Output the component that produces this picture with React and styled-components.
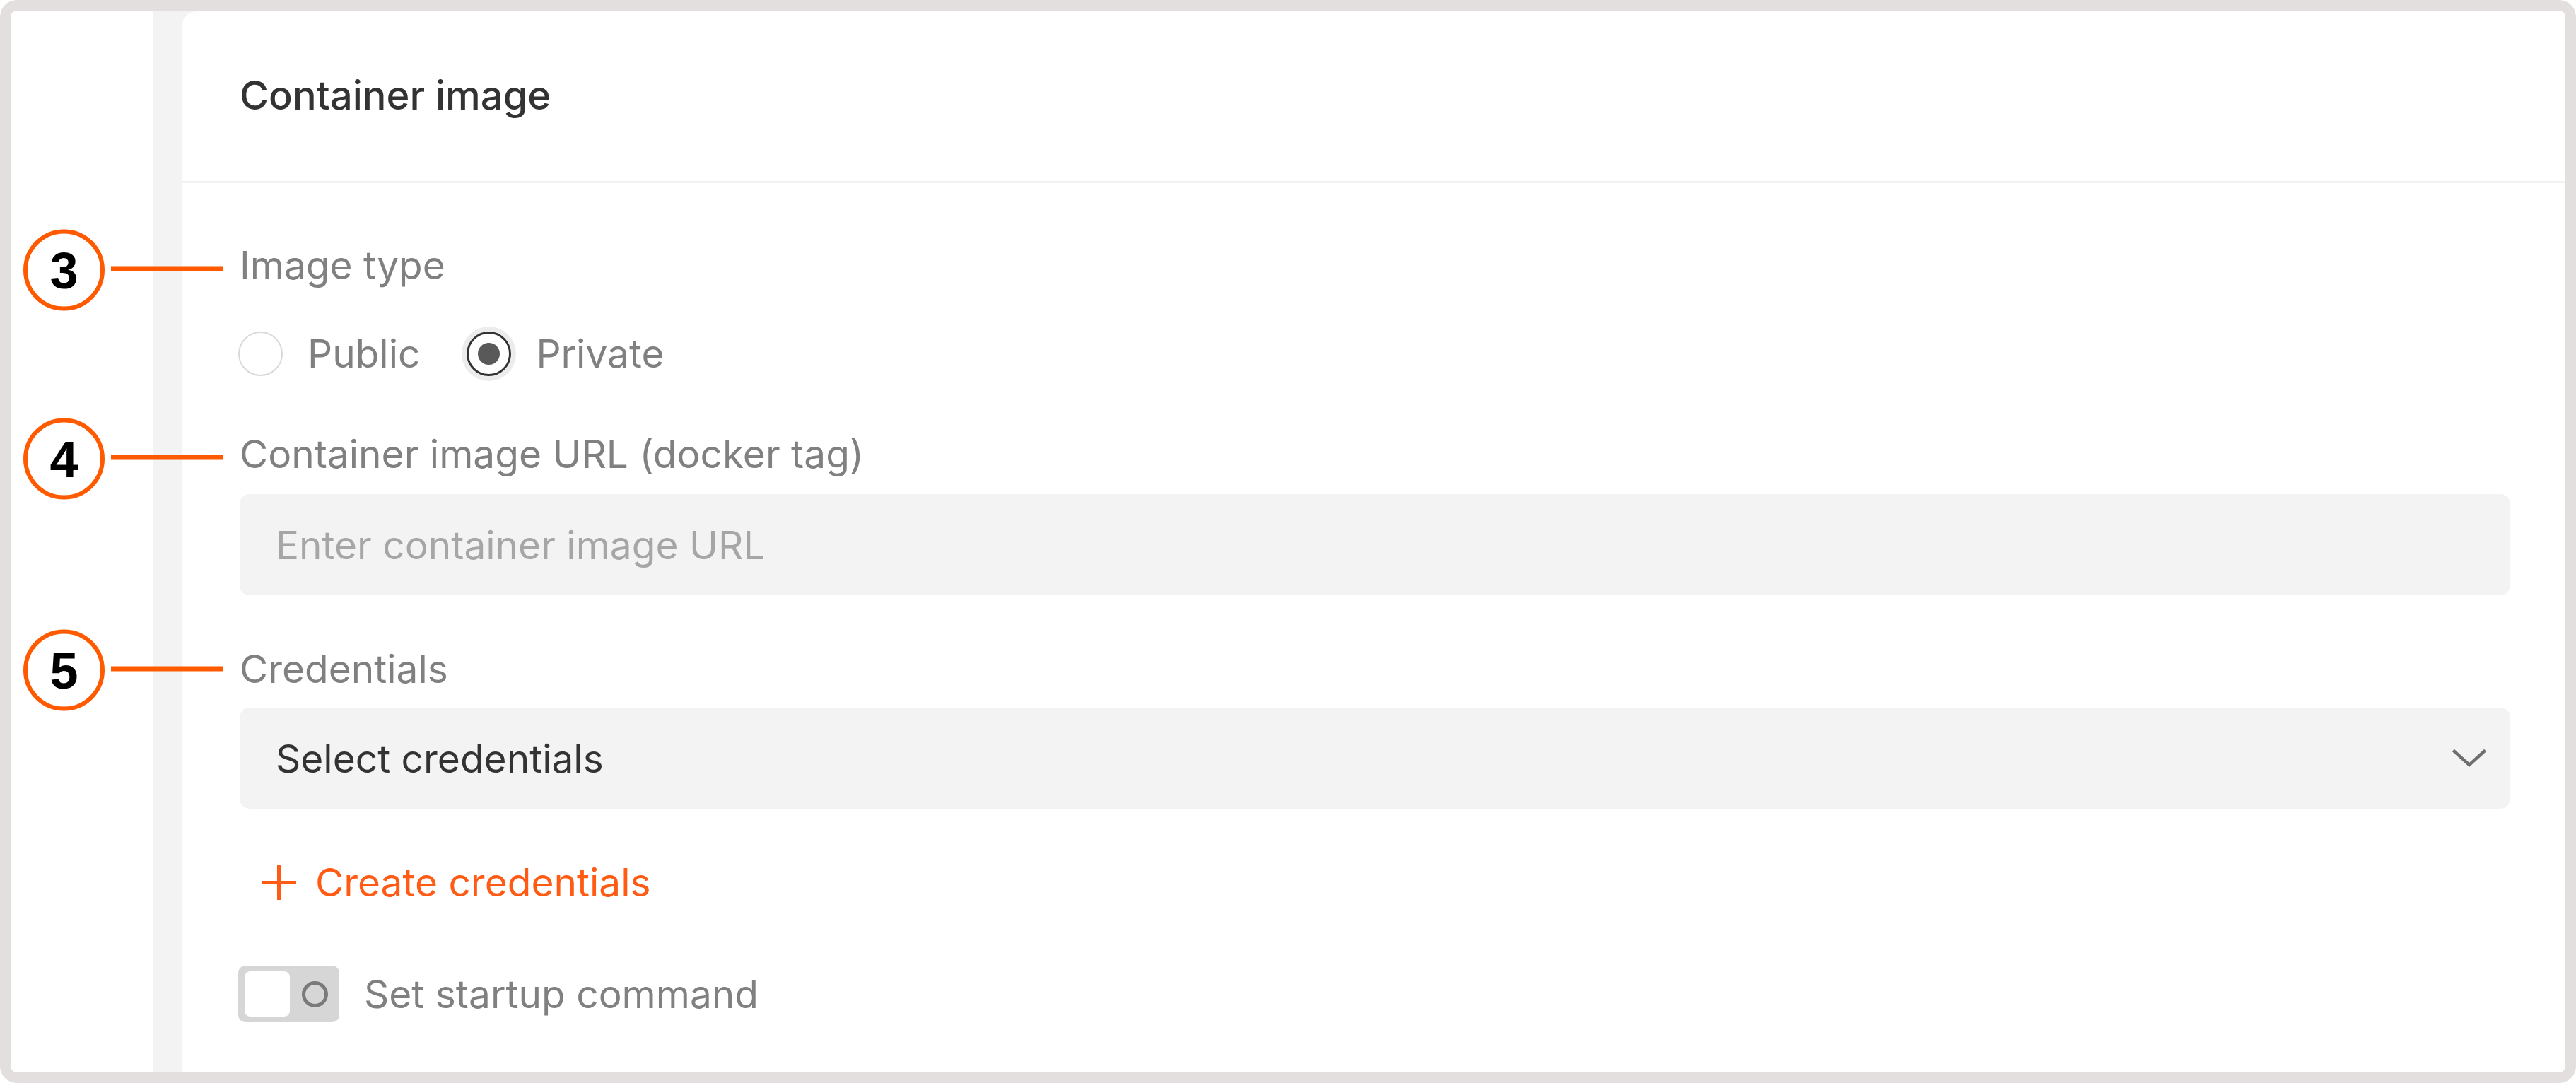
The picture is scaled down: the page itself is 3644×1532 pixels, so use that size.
import React from "react";
import styled, { createGlobalStyle, css } from "styled-components";

const GlobalStyle = createGlobalStyle`
  html, body {
    margin: 0;
    padding: 0;
    background: #ffffff;
  }
  * { box-sizing: border-box; }
  body {
    font-family: Inter, "Noto Sans", "Liberation Sans", sans-serif;
  }
`;

const ORANGE = "#ff5a00";

const Frame = styled.div`
  width: 3644px;
  height: 1532px;
  background: #e2dfde;
  border-radius: 24px;
  padding: 16px;
`;

const Screen = styled.div`
  height: 100%;
  background: #ffffff;
  border-radius: 6px;
  overflow: hidden;
  display: flex;
`;

const Gutter = styled.div`
  width: 200px;
  flex: none;
  background: #ffffff;
`;

const Canvas = styled.div`
  flex: 1;
  background: #f3f3f3;
  padding-left: 42px;
  display: flex;
`;

const Card = styled.section`
  flex: 1;
  background: #ffffff;
  border-top-left-radius: 20px;
  display: flex;
  flex-direction: column;
`;

const CardHeader = styled.header`
  height: 243px;
  padding-left: 81px;
  display: flex;
  align-items: center;
  border-bottom: 3px solid #f2f2f2;
  padding-bottom: 3px;
`;

const CardTitle = styled.h2`
  margin: 0;
  font-size: 56px;
  line-height: 80px;
  font-weight: 500;
  color: #333333;
`;

const CardBody = styled.div`
  padding: 76px 77px 0 81px;
  display: flex;
  flex-direction: column;
  align-items: stretch;
`;

const FieldLabel = styled.div`
  position: relative;
  font-size: 55px;
  line-height: 80px;
  color: #808080;
  margin-top: ${(p) => p.$gap || 0}px;
`;

const Annotation = styled.div`
  position: absolute;
  left: -306px;
  top: 50%;
  transform: translateY(calc(-50% + ${(p) => p.$shift || 0}px));
  display: flex;
  align-items: center;
  pointer-events: none;
`;

const AnnotationBadge = styled.span`
  width: 115px;
  height: 115px;
  border-radius: 50%;
  border: 6px solid ${ORANGE};
  background: #ffffff;
  display: flex;
  align-items: center;
  justify-content: center;
  font-family: "Liberation Sans", Arial, sans-serif;
  font-weight: 700;
  font-size: 72px;
  line-height: 1;
  color: #000000;
`;

const AnnotationLine = styled.span`
  width: 159px;
  height: 7px;
  margin-left: 9px;
  background: ${ORANGE};
  margin-top: ${(p) => p.$lineShift || 0}px;
`;

const RadioGroup = styled.div`
  display: flex;
  align-items: center;
  height: 80px;
  margin-top: 45px;
  margin-left: -2px;
  gap: 66px;
`;

const RadioOption = styled.label`
  display: flex;
  align-items: center;
  gap: 35px;
  font-size: 55px;
  line-height: 80px;
  color: #808080;
`;

const RadioCircle = styled.span`
  width: 63px;
  height: 63px;
  border-radius: 50%;
  flex: none;
  display: flex;
  align-items: center;
  justify-content: center;
  background: #ffffff;
  border: 2px solid #d9d9d9;
  ${(p) =>
    p.$checked &&
    css`
      border: 3px solid #333333;
      box-shadow: 0 0 0 7px #ececec;
      &::after {
        content: "";
        width: 31px;
        height: 31px;
        border-radius: 50%;
        background: #595959;
      }
    `}
`;

const fieldBox = css`
  height: 143px;
  border-radius: 14px;
  background: #f3f3f3;
  padding: 0 34px 0 51px;
  display: flex;
  align-items: center;
  font-size: 55px;
  margin-top: ${(p) => p.$gap || 0}px;
`;

const TextInput = styled.div`
  ${fieldBox}
  color: #a6a6a6;
`;

const SelectBox = styled.div`
  ${fieldBox}
  color: #333333;
  justify-content: space-between;
`;

const Chevron = styled.svg`
  width: 48px;
  height: 28px;
  flex: none;
`;

const CreateLink = styled.div`
  margin-top: 64px;
  height: 80px;
  display: flex;
  align-items: center;
  gap: 27px;
  padding-left: 31px;
  font-size: 55px;
  color: #ff5b14;
`;

const PlusIcon = styled.svg`
  width: 49px;
  height: 49px;
  flex: none;
`;

const ToggleRow = styled.div`
  margin-top: 78px;
  height: 80px;
  display: flex;
  align-items: center;
  gap: 35px;
  margin-left: -2px;
  font-size: 55px;
  color: #808080;
`;

const Toggle = styled.span`
  width: 143px;
  height: 80px;
  border-radius: 10px;
  background: #d6d6d6;
  flex: none;
  display: flex;
  align-items: center;
  padding-left: 9px;
`;

const ToggleKnob = styled.span`
  width: 64px;
  height: 64px;
  border-radius: 8px;
  background: #ffffff;
  flex: none;
`;

const ToggleOffMark = styled.span`
  width: 37px;
  height: 37px;
  border-radius: 50%;
  border: 5px solid #7a7a7a;
  margin-left: 17px;
  flex: none;
`;

function Marker({ n, shift = 0 }) {
  return (
    <Annotation $shift={shift}>
      <AnnotationBadge>{n}</AnnotationBadge>
      <AnnotationLine $lineShift={-4} />
    </Annotation>
  );
}

export default function App() {
  return (
    <>
      <GlobalStyle />
      <Frame>
        <Screen>
          <Gutter />
          <Canvas>
            <Card>
              <CardHeader>
                <CardTitle>Container image</CardTitle>
              </CardHeader>
              <CardBody>
                <FieldLabel>
                  <Marker n="3" shift={7} />
                  Image type
                </FieldLabel>
                <RadioGroup>
                  <RadioOption>
                    <RadioCircle />
                    Public
                  </RadioOption>
                  <RadioOption>
                    <RadioCircle $checked />
                    Private
                  </RadioOption>
                </RadioGroup>

                <FieldLabel $gap={62}>
                  <Marker n="4" shift={7} />
                  Container image URL (docker tag)
                </FieldLabel>
                <TextInput $gap={17}>Enter container image URL</TextInput>

                <FieldLabel $gap={64}>
                  <Marker n="5" shift={2} />
                  Credentials
                </FieldLabel>
                <SelectBox $gap={15}>
                  Select credentials
                  <Chevron viewBox="0 0 48 28" fill="none">
                    <polyline
                      points="3,4 24,23 45,4"
                      stroke="#6e6e6e"
                      strokeWidth="4.5"
                      strokeLinecap="square"
                    />
                  </Chevron>
                </SelectBox>

                <CreateLink>
                  <PlusIcon viewBox="0 0 49 49" fill="none">
                    <line x1="24.5" y1="0" x2="24.5" y2="49" stroke="#ff5b14" strokeWidth="5" />
                    <line x1="0" y1="24.5" x2="49" y2="24.5" stroke="#ff5b14" strokeWidth="5" />
                  </PlusIcon>
                  Create credentials
                </CreateLink>

                <ToggleRow>
                  <Toggle>
                    <ToggleKnob />
                    <ToggleOffMark />
                  </Toggle>
                  Set startup command
                </ToggleRow>
              </CardBody>
            </Card>
          </Canvas>
        </Screen>
      </Frame>
    </>
  );
}
